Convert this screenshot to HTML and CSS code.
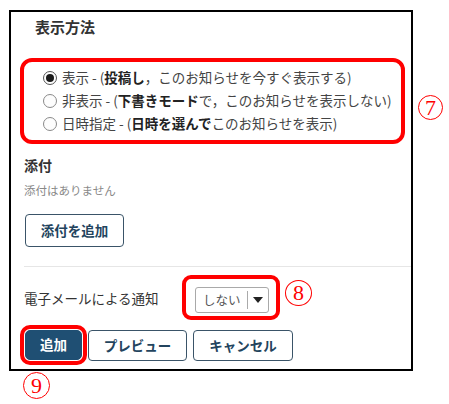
FILE: index.html
```html
<!DOCTYPE html>
<html lang="ja">
<head>
    <meta charset="UTF-8">
    <meta name="viewport" content="width=device-width, initial-scale=1.0">
    <title>お知らせの追加</title>
    <link rel="stylesheet" href="styles.css">
</head>
<body>
    <div class="page">
        <div class="panel">
            <h2 class="section-title">表示方法</h2>
            <div class="mark mark-radios">
                <label class="radio-row"><span class="radio checked"></span><span>表示 - (<b>投稿し</b>，このお知らせを今すぐ表示する)</span></label>
                <label class="radio-row"><span class="radio"></span><span>非表示 - (<b>下書きモード</b>で，このお知らせを表示しない)</span></label>
                <label class="radio-row"><span class="radio"></span><span>日時指定 - (<b>日時を選んで</b>このお知らせを表示)</span></label>
                <span class="callout callout-7">7</span>
            </div>

            <h3 class="sub-title">添付</h3>
            <p class="note">添付はありません</p>
            <button type="button" class="btn btn-attach">添付を追加</button>

            <hr class="divider">

            <div class="notify-row">
                <span class="notify-label">電子メールによる通知</span>
                <span class="mark mark-select">
                    <span class="select">
                        <span class="select-value">しない</span>
                        <span class="select-arrow"></span>
                    </span>
                </span>
                <span class="callout callout-8">8</span>
            </div>

            <div class="actions">
                <button type="button" class="btn btn-primary">追加</button>
                <button type="button" class="btn btn-preview">プレビュー</button>
                <button type="button" class="btn btn-cancel">キャンセル</button>
            </div>
        </div>
        <span class="callout callout-9">9</span>
    </div>
</body>
</html>
```

FILE: styles.css
```css
body {
    margin: 0;
    padding: 0;
    background-color: #fff;
    font-family: "Noto Sans CJK JP", "Noto Sans", sans-serif;
    color: #444;
}
.page {
    padding: 10px 0 0 9px;
}
.panel {
    box-sizing: border-box;
    width: 404px;
    border: 2px solid #000;
    padding: 5px 0 8px 13px;
}
.section-title {
    margin: 0 0 22px 11px;
    font-size: 15px;
    line-height: 19px;
    font-weight: bold;
    color: #333;
}
.mark {
    border: 4px solid #f00;
}
.mark-radios {
    position: relative;
    margin: 0 6px 0 -4px;
    padding: 4px 0 5px 19px;
    border-radius: 12px;
}
.radio-row {
    display: flex;
    align-items: center;
    gap: 5px;
    height: 23px;
    font-size: 13.5px;
    line-height: 23px;
    color: #444;
    white-space: nowrap;
}
.radio-row b {
    color: #222;
}
.radio {
    box-sizing: border-box;
    width: 14px;
    height: 14px;
    border: 1px solid #8a8a8a;
    border-radius: 50%;
    background: #fdfdfd;
    display: flex;
    align-items: center;
    justify-content: center;
}
.radio.checked {
    border-color: #555;
}
.radio.checked::after {
    content: "";
    width: 8px;
    height: 8px;
    border-radius: 50%;
    background: #1a1a1a;
}
.callout {
    box-sizing: border-box;
    display: inline-flex;
    align-items: center;
    justify-content: center;
    width: 25px;
    height: 25px;
    border: 1.5px solid #f00;
    border-radius: 50%;
    color: #f00;
    font-family: "Liberation Serif", serif;
    font-size: 22px;
    line-height: 1;
    padding-top: 1px;
}
.callout-7 {
    position: absolute;
    top: 33px;
    right: -42px;
}
.sub-title {
    margin: 11px 0 0;
    font-size: 14px;
    line-height: 20px;
    font-weight: bold;
    color: #333;
}
.note {
    margin: 7px 0 0;
    font-size: 11.5px;
    line-height: 16px;
    color: #888;
}
.btn {
    box-sizing: border-box;
    height: 31px;
    padding: 0;
    border: 1px solid #3a5468;
    border-radius: 4px;
    background: #fff;
    color: #23445e;
    font-family: "Noto Sans CJK JP", sans-serif;
    font-size: 13.5px;
    font-weight: bold;
    line-height: 1;
    cursor: pointer;
}
.btn-attach {
    display: block;
    margin: 16px 0 0 1px;
    width: 99px;
    height: 33px;
}
.divider {
    margin: 19px 0 0;
    border: none;
    border-top: 1px solid #e6e6e6;
}
.notify-row {
    display: flex;
    align-items: center;
    margin-top: 8px;
}
.notify-label {
    font-size: 13.5px;
    line-height: 20px;
    color: #333;
    width: 158px;
}
.mark-select {
    display: inline-flex;
    padding: 8px 7px 3px 9px;
    border-radius: 9px;
}
.select {
    box-sizing: border-box;
    display: inline-flex;
    align-items: center;
    width: 74px;
    height: 26px;
    border: 1px solid #a9a9a9;
    border-radius: 3px;
    background: #fff;
}
.select-value {
    width: 44px;
    padding-left: 7px;
    font-size: 12.5px;
    line-height: 18px;
    color: #555;
    border-right: 1px solid #aaa;
}
.select-arrow {
    margin-left: 5px;
    width: 0;
    height: 0;
    border-left: 5px solid transparent;
    border-right: 5px solid transparent;
    border-top: 6px solid #222;
}
.callout-8 {
    margin: -10px 0 0 5px;
    width: 27px;
    height: 26px;
}
.actions {
    display: flex;
    gap: 6px;
    margin: 10px 0 0 1px;
}
.btn-primary {
    width: 57px;
    height: 30px;
    background: #1f4f73;
    border-color: #1f4f73;
    color: #fff;
    outline: 4px solid #f00;
    outline-offset: 1px;
    border-radius: 5px;
}
.btn-preview {
    width: 99px;
}
.btn-cancel {
    width: 100px;
}
.callout-9 {
    margin: 1px 0 0 14px;
    width: 27px;
    height: 27px;
}
```
